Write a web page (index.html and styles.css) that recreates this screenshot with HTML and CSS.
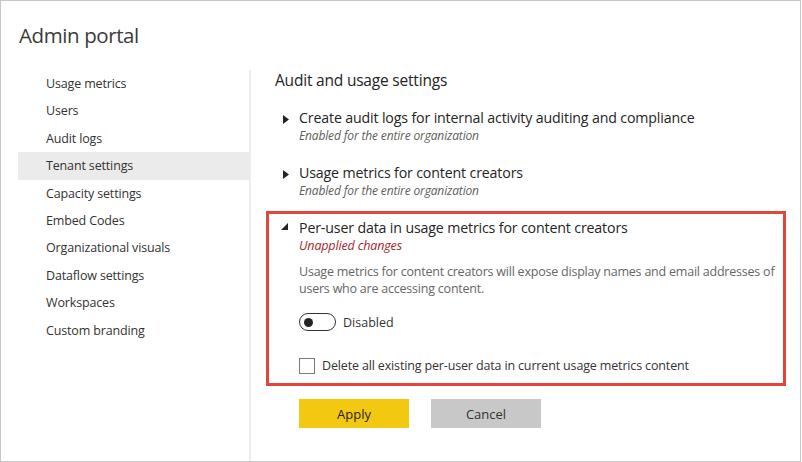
FILE: index.html
```html
<!DOCTYPE html>
<html>
<head>
<meta charset="utf-8">
<link rel="stylesheet" href="styles.css">
</head>
<body>
<div class="window">
  <h1 class="title">Admin portal</h1>
  <div class="body">
    <nav class="sidebar">
      <div class="nav-item">Usage metrics</div>
      <div class="nav-item">Users</div>
      <div class="nav-item">Audit logs</div>
      <div class="nav-item selected">Tenant settings</div>
      <div class="nav-item">Capacity settings</div>
      <div class="nav-item">Embed Codes</div>
      <div class="nav-item">Organizational visuals</div>
      <div class="nav-item">Dataflow settings</div>
      <div class="nav-item">Workspaces</div>
      <div class="nav-item">Custom branding</div>
    </nav>
    <main class="main">
      <h2 class="section-title">Audit and usage settings</h2>
      <div class="setting">
        <svg class="caret" width="6" height="9" viewBox="0 0 6 9"><polygon points="0,0 6,4.5 0,9" fill="#252423"/></svg>
        <div class="setting-name">Create audit logs for internal activity auditing and compliance</div>
        <div class="setting-sub">Enabled for the entire organization</div>
      </div>
      <div class="setting">
        <svg class="caret" width="6" height="9" viewBox="0 0 6 9"><polygon points="0,0 6,4.5 0,9" fill="#252423"/></svg>
        <div class="setting-name">Usage metrics for content creators</div>
        <div class="setting-sub">Enabled for the entire organization</div>
      </div>
      <div class="setting expanded">
        <svg class="caret caret-open" width="7" height="7" viewBox="0 0 7 7"><polygon points="7,0 7,7 0,7" fill="#252423"/></svg>
        <div class="setting-name">Per-user data in usage metrics for content creators</div>
        <div class="unapplied">Unapplied changes</div>
        <p class="desc">Usage metrics for content creators will expose display names and email addresses of users who are accessing content.</p>
        <div class="toggle-row">
          <span class="toggle"><span class="knob"></span></span>
          <span class="toggle-label">Disabled</span>
        </div>
        <label class="check-row">
          <span class="checkbox"></span>
          <span>Delete all existing per-user data in current usage metrics content</span>
        </label>
      </div>
      <div class="buttons">
        <button class="btn apply">Apply</button>
        <button class="btn cancel">Cancel</button>
      </div>
    </main>
  </div>
</div>
</body>
</html>
```
FILE: styles.css
```css
* { box-sizing: border-box; }
body {
  margin: 0;
  font-family: "Open Sans", "Noto Sans", sans-serif;
  color: #252423;
}
.window {
  width: 801px;
  height: 462px;
  border: 1px solid #c6c6c6;
  background: #fff;
  display: flex;
  flex-direction: column;
  overflow: hidden;
}
.title {
  margin: 0;
  padding: 19px 0 0 18px;
  height: 69px;
  font-size: 20.5px;
  font-weight: 400;
  line-height: 30px;
  color: #3b3a39;
  letter-spacing: -0.4px;
}
.body {
  display: flex;
  flex: 1;
}
.sidebar {
  width: 248px;
  padding-left: 17px;
  flex-shrink: 0;
}
.nav-item {
  height: 27.4px;
  line-height: 27.4px;
  padding-left: 28px;
  font-size: 12.5px;
  color: #333;
  letter-spacing: -0.15px;
}
.nav-item.selected {
  background: #ebebeb;
}
.main {
  flex: 1;
  border-left: 2px solid #ececec;
  padding-left: 15px;
}
.section-title {
  margin: 0 0 0 9px;
  font-size: 15.5px;
  font-weight: 400;
  line-height: 20px;
  color: #252423;
  letter-spacing: -0.2px;
}
.setting {
  position: relative;
  padding-left: 33px;
  margin-top: 19px;
  height: 36px;
}
.setting + .setting { margin-top: 19px; }
.caret {
  position: absolute;
  left: 17px;
  top: 6px;
}
.setting-name {
  font-size: 14.2px;
  line-height: 18px;
  color: #252423;
  letter-spacing: -0.15px;
}
.setting-sub {
  font-size: 12px;
  font-style: italic;
  line-height: 17px;
  color: #605e5c;
  letter-spacing: -0.15px;
}
.setting.expanded {
  height: auto;
  width: 520px;
  margin-top: 11px;
  border: 3px solid #e5433e;
  padding: 5px 1px 9px 30px;
}
.caret-open {
  left: 12px;
  top: 9px;
}
.unapplied {
  font-size: 12.5px;
  font-style: italic;
  line-height: 17px;
  color: #a4262c;
  letter-spacing: -0.15px;
}
.desc {
  margin: 9px 0 0;
  font-size: 12.5px;
  line-height: 17px;
  color: #666;
  letter-spacing: -0.22px;
}
.toggle-row {
  display: flex;
  align-items: center;
  gap: 7px;
  margin-top: 15px;
  height: 20px;
}
.toggle {
  width: 37px;
  height: 18px;
  border: 1px solid #333;
  border-radius: 9px;
  display: flex;
  align-items: center;
  padding-left: 4px;
}
.knob {
  width: 9px;
  height: 9px;
  border-radius: 50%;
  background: #252423;
}
.toggle-label {
  font-size: 12.5px;
  color: #333;
}
.check-row {
  display: flex;
  align-items: center;
  gap: 7px;
  margin-top: 25px;
  font-size: 12.5px;
  color: #333;
  letter-spacing: -0.15px;
}
.checkbox {
  width: 16px;
  height: 16px;
  border: 1px solid #7a7a7a;
  background: #fff;
}
.buttons {
  display: flex;
  gap: 22px;
  margin: 13px 0 0 33px;
}
.btn {
  width: 110px;
  height: 29px;
  border: none;
  font-family: "Open Sans", "Noto Sans", sans-serif;
  font-size: 13px;
  color: #252423;
  padding: 0;
}
.apply { background: #f2c811; }
.cancel { background: #c8c8c8; color: #333; }
```
